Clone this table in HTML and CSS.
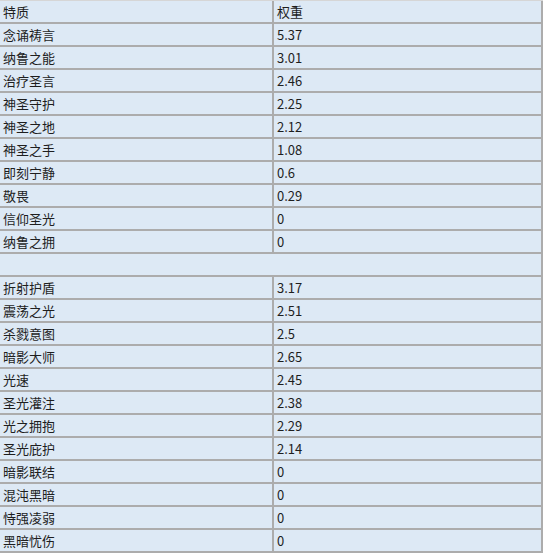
FILE: index.html
```html
<!DOCTYPE html>
<html>
<head>
<meta charset="utf-8">
<link rel="stylesheet" href="styles.css">
</head>
<body>
<div class="grid">
  <div class="c">特质</div><div class="c">权重</div>
  <div class="c">念诵祷言</div><div class="c">5.37</div>
  <div class="c">纳鲁之能</div><div class="c">3.01</div>
  <div class="c">治疗圣言</div><div class="c">2.46</div>
  <div class="c">神圣守护</div><div class="c">2.25</div>
  <div class="c">神圣之地</div><div class="c">2.12</div>
  <div class="c">神圣之手</div><div class="c">1.08</div>
  <div class="c">即刻宁静</div><div class="c">0.6</div>
  <div class="c">敬畏</div><div class="c">0.29</div>
  <div class="c">信仰圣光</div><div class="c">0</div>
  <div class="c">纳鲁之拥</div><div class="c">0</div>
  <div class="c span"></div>
  <div class="c">折射护盾</div><div class="c">3.17</div>
  <div class="c">震荡之光</div><div class="c">2.51</div>
  <div class="c">杀戮意图</div><div class="c">2.5</div>
  <div class="c">暗影大师</div><div class="c">2.65</div>
  <div class="c">光速</div><div class="c">2.45</div>
  <div class="c">圣光灌注</div><div class="c">2.38</div>
  <div class="c">光之拥抱</div><div class="c">2.29</div>
  <div class="c">圣光庇护</div><div class="c">2.14</div>
  <div class="c">暗影联结</div><div class="c">0</div>
  <div class="c">混沌黑暗</div><div class="c">0</div>
  <div class="c">恃强凌弱</div><div class="c">0</div>
  <div class="c">黑暗忧伤</div><div class="c">0</div>
</div>
</body>
</html>
```
FILE: styles.css
```css
html, body {
  margin: 0;
  padding: 0;
  background: #ffffff;
}
.grid {
  width: 541px;
  display: grid;
  grid-template-columns: 272px 267px;
  grid-auto-rows: 21px;
  gap: 2px;
  padding: 0 2px 2px 0;
  background: #acacac;
  border-top: 1px solid #d6d6d6;
  font-family: "Noto Sans CJK SC", "Noto Sans", sans-serif;
  font-size: 13px;
  color: #1e1e1e;
}
.c {
  background: #dde9f5;
  line-height: 21px;
  padding-left: 3px;
  white-space: nowrap;
  overflow: hidden;
}
.span {
  grid-column: 1 / 3;
}
```
